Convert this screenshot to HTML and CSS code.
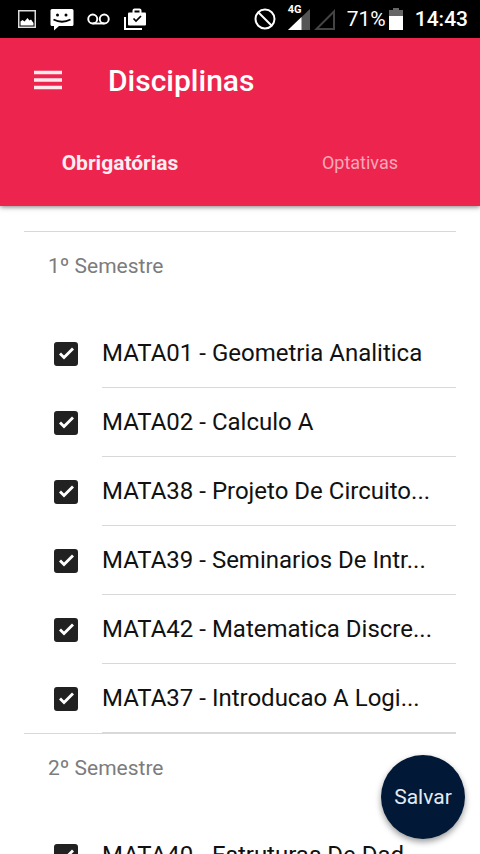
FILE: index.html
```html
<!DOCTYPE html>
<html lang="pt-BR">
<head>
<meta charset="utf-8">
<meta name="viewport" content="width=device-width, initial-scale=1">
<title>Disciplinas</title>
<link rel="stylesheet" href="styles.css">
</head>
<body>
<div class="app">
  <div class="status">
    <div class="status-group notices">
      <svg width="18" height="18" viewBox="0 0 18 18"><path d="M.75 .75h16.500v16.500H.75z" fill="none" stroke="#ddd" stroke-width="1.500"/><path d="M2.500 15.500v-4l2-1.500 2 1.500 3-3.500 2 2.500 1.500-1 2.500 3.500v2.500z" fill="#fff"/></svg>
      <svg width="23" height="23" viewBox="0 0 23 23" overflow="visible"><path d="M2 1h20q1.500 0 1.500 1.500v14q0 1.500-1.500 1.500H9l-5 4.500V18H2q-1.500 0-1.500-1.500v-14Q.5 1 2 1z" fill="#fff"/><circle cx="7.500" cy="7" r="1.500"/><circle cx="16" cy="7" r="1.500"/><path d="M3.500 11.500q8.500 4.500 17 0" fill="none" stroke="#000" stroke-width="1.800"/></svg>
      <svg width="23" height="12" viewBox="0 0 24 12"><g fill="none" stroke="#fff" stroke-width="2"><circle cx="6" cy="6" r="4.700"/><circle cx="18" cy="6" r="4.700"/><path d="M6 10.700h12"/></g></svg>
      <svg width="22" height="22" viewBox="0 0 22 22"><path d="M1 9v12h17" fill="none" stroke="#fff" stroke-width="2"/><path d="M9.500 5V2.500q0-1 1-1h5q1 0 1 1V5" fill="none" stroke="#fff" stroke-width="2"/><path d="M5 4.500h16q1 0 1 1v11q0 1-1 1H5q-1 0-1-1v-11q0-1 1-1z" fill="#fff"/><path d="M9.500 10.500l2.500 2.500 5-5" fill="none" stroke="#000" stroke-width="1.700"/></svg>
    </div>
    <div class="status-group system">
      <svg width="22" height="22" viewBox="0 0 22 22"><g fill="none" stroke="#fff" stroke-width="2"><circle cx="11" cy="11" r="9.500"/><path d="M4.500 4.500l13 13"/></g></svg>
      <div class="signal"><span class="network">4G</span><svg width="22" height="22" viewBox="0 0 22 22"><path d="M22 1v21H0z" fill="#555"/><path d="M13.500 9.100V22H0z" fill="#fff"/></svg><svg width="21" height="22" viewBox="0 0 21 22"><path d="M20 3.500V21H2.500z" fill="none" stroke="#444" stroke-width="2"/></svg></div>
      <span class="charge">71%<svg width="14" height="22" viewBox="0 0 14 22"><path d="M4 0h6v2h4v7H0V2h4z" fill="#666"/><path d="M0 8h14v14H0z" fill="#fff"/></svg></span>
      <time class="clock">14:43</time>
    </div>
  </div>
  <header class="header">
    <div class="toolbar">
      <button class="menu" type="button" aria-label="Menu"><svg width="28" height="20" viewBox="0 0 28 20"><path d="M0 2.500h28M0 10h28M0 17.500h28" stroke="#fff" stroke-opacity=".9" stroke-width="3.500"/></svg></button>
      <h1 class="title">Disciplinas</h1>
    </div>
    <nav class="tabs">
      <a class="tab active" href="#obrigatorias">Obrigatórias</a>
      <a class="tab" href="#optativas">Optativas</a>
    </nav>
  </header>
  <main class="content" id="obrigatorias">
    <section class="semester">
      <h2 class="semester-title">1º Semestre</h2>
      <ul class="courses">
        <li><label class="course"><input type="checkbox" checked><span class="name">MATA01 - Geometria Analitica</span></label></li>
        <li><label class="course"><input type="checkbox" checked><span class="name">MATA02 - Calculo A</span></label></li>
        <li><label class="course"><input type="checkbox" checked><span class="name">MATA38 - Projeto De Circuito...</span></label></li>
        <li><label class="course"><input type="checkbox" checked><span class="name">MATA39 - Seminarios De Intr...</span></label></li>
        <li><label class="course"><input type="checkbox" checked><span class="name">MATA42 - Matematica Discre...</span></label></li>
        <li><label class="course"><input type="checkbox" checked><span class="name">MATA37 - Introducao A Logi...</span></label></li>
      </ul>
    </section>
    <section class="semester">
      <h2 class="semester-title">2º Semestre</h2>
      <ul class="courses">
        <li><label class="course"><input type="checkbox" checked><span class="name">MATA40 - Estruturas De Dad...</span></label></li>
      </ul>
    </section>
  </main>
  <button class="save" type="button">Salvar</button>
</div>
</body>
</html>
```
FILE: styles.css
```css
* {
  box-sizing: border-box;
}

body {
  margin: 0;
  background: #fff;
  color: #111;
  font-family: Roboto, "Liberation Sans", sans-serif;
}

.app {
  display: flex;
  flex-direction: column;
  height: 100vh;
  overflow: hidden;
}

.status {
  flex: none;
  display: flex;
  justify-content: space-between;
  align-items: center;
  height: 38px;
  padding: 0 12px 0 18px;
  background: #000;
  color: #fff;
}

.status-group {
  display: flex;
  align-items: center;
}

.notices {
  gap: 14px;
}

.system {
  gap: 12px;
}

.signal {
  position: relative;
  display: flex;
  gap: 4px;
}

.network {
  position: absolute;
  top: -4px;
  left: 0;
  font-size: 11px;
  line-height: 12px;
  font-weight: 700;
  background: #000;
}

.charge {
  display: flex;
  align-items: center;
  gap: 3px;
  font-size: 21px;
}

.clock {
  font-size: 21px;
  font-weight: 500;
}

.header {
  flex: none;
  position: relative;
  background: #ed254e;
  color: #fff;
  box-shadow: 0 1px 5px rgba(0, 0, 0, 0.5);
}

.toolbar {
  display: flex;
  align-items: center;
  gap: 46px;
  height: 84px;
  padding: 0 34px;
}

.menu {
  display: flex;
  padding: 0;
  border: 0;
  background: none;
}

.title {
  margin: 0;
  font-size: 30px;
  font-weight: 500;
}

.tabs {
  display: grid;
  grid-template-columns: 1fr 1fr;
  height: 84px;
}

.tab {
  padding-top: 28px;
  color: #f9a8b8;
  font-size: 18px;
  line-height: 26px;
  text-align: center;
  text-decoration: none;
}

.tab.active {
  color: #ffeef1;
  font-size: 21px;
  font-weight: 700;
}

.content {
  flex: 1;
  min-height: 0;
  overflow: hidden;
  padding: 25px 24px 0;
}

.semester {
  border-top: 1px solid #d8d8d8;
}

.semester-title {
  margin: 0;
  padding: 20px 24px 39px;
  color: #7c7c7c;
  font-size: 21px;
  line-height: 28px;
  font-weight: 400;
}

.courses {
  margin: 0;
  padding: 0;
  list-style: none;
}

.course {
  display: flex;
  align-items: center;
  gap: 24px;
  padding-left: 30px;
}

.course input {
  flex: none;
  appearance: none;
  width: 24px;
  height: 24px;
  margin: 0;
  border: 2px solid #212121;
  border-radius: 3px;
}

.course input:checked {
  background: #212121;
}

.course input:checked::before {
  content: "";
  display: block;
  width: 20px;
  height: 20px;
  background: #fff;
  clip-path: polygon(3px 11px, 5px 9px, 8px 12px, 16px 4px, 18px 6px, 8px 16px);
}

.name {
  flex: 1;
  min-width: 0;
  height: 69px;
  border-bottom: 1px solid #d8d8d8;
  font-size: 24px;
  line-height: 68px;
  white-space: nowrap;
}

.save {
  position: absolute;
  right: 15px;
  bottom: 15px;
  width: 84px;
  height: 84px;
  padding: 0;
  border: 0;
  border-radius: 50%;
  background: #011936;
  box-shadow: 0 3px 6px rgba(0, 0, 0, 0.4);
  color: #e4ebf5;
  font-family: inherit;
  font-size: 21px;
}
```
